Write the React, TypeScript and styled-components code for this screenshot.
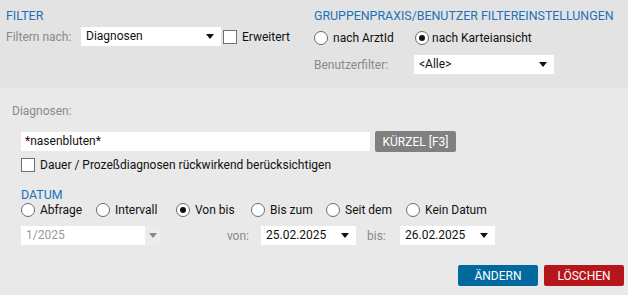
import React from "react";
import styled, { createGlobalStyle } from "styled-components";

const Global = createGlobalStyle`
  html, body { margin: 0; padding: 0; background: #e9e9e9; }
  body { font-family: Roboto, "Liberation Sans", Arial, sans-serif; font-size: 12px; color: #111; }
  * { box-sizing: border-box; }
`;

const Page = styled.div`
  width: 628px;
  height: 295px;
  display: flex;
  flex-direction: column;
  overflow: hidden;
`;

const TopPanel = styled.div`
  height: 88px;
  background: #e3e3e3;
  padding: 8px 0 0 6px;
  display: grid;
  grid-template-columns: 308px 1fr;
`;

const Column = styled.div`
  display: flex;
  flex-direction: column;
`;

const Title = styled.div<{ $h?: number }>`
  color: #1c72b8;
  font-size: 12.4px;
  line-height: ${(p) => p.$h ?? 16}px;
  height: ${(p) => p.$h ?? 16}px;
  text-transform: uppercase;
  white-space: nowrap;
`;

const Row = styled.div<{ $mt?: number; $h?: number }>`
  display: flex;
  align-items: center;
  margin-top: ${(p) => p.$mt ?? 0}px;
  height: ${(p) => p.$h ?? 19}px;
  white-space: nowrap;
`;

const Label = styled.span<{ $w?: number }>`
  color: #8a8a8a;
  width: ${(p) => (p.$w ? `${p.$w}px` : "auto")};
  flex: none;
`;

const SelectBox = styled.div<{ $w: number; $disabled?: boolean }>`
  width: ${(p) => p.$w}px;
  height: 19px;
  background: #fff;
  display: flex;
  align-items: center;
  flex: none;
  color: ${(p) => (p.$disabled ? "#999" : "#111")};
`;

const SelectText = styled.span`
  flex: 1;
  padding-left: 5px;
  line-height: 19px;
`;

const ArrowCell = styled.span<{ $disabled?: boolean }>`
  width: 16px;
  height: 19px;
  display: flex;
  align-items: center;
  justify-content: center;
  background: ${(p) => (p.$disabled ? "#ececec" : "transparent")};
  margin-right: 3px;
  &::after {
    content: "";
    border-left: 4px solid transparent;
    border-right: 4px solid transparent;
    border-top: 5px solid ${(p) => (p.$disabled ? "#888" : "#111")};
  }
`;

const Box = styled.span`
  width: 14px;
  height: 14px;
  background: #fff;
  border: 1px solid #707070;
  flex: none;
`;

const Radio = styled.span<{ $on?: boolean }>`
  width: 14px;
  height: 14px;
  border-radius: 50%;
  background: #fff;
  border: 1px solid #6a6a6a;
  flex: none;
  display: flex;
  align-items: center;
  justify-content: center;
  &::after {
    content: "";
    display: ${(p) => (p.$on ? "block" : "none")};
    width: 6px;
    height: 6px;
    border-radius: 50%;
    background: #111;
  }
`;

const Option = styled.label<{ $w?: number; $gap?: number }>`
  display: flex;
  align-items: center;
  gap: ${(p) => p.$gap ?? 5}px;
  width: ${(p) => (p.$w ? `${p.$w}px` : "auto")};
  flex: none;
  color: #111;
`;

const LowerPanel = styled.div`
  flex: 1;
  background: #e9e9e9;
  padding: 15px 4px 0 12px;
  display: flex;
  flex-direction: column;
`;

const Inner = styled.div`
  margin-left: 9px;
  display: flex;
  flex-direction: column;
`;

const TextInput = styled.div`
  width: 349px;
  height: 19px;
  background: #fff;
  padding-left: 4px;
  line-height: 19px;
  color: #111;
`;

const GrayButton = styled.div`
  margin-left: 5px;
  width: 81px;
  height: 21px;
  border-radius: 2px;
  background: #808080;
  color: #fff;
  font-size: 12px;
  display: flex;
  align-items: center;
  justify-content: center;
`;

const Actions = styled.div`
  margin-top: 20px;
  display: flex;
  justify-content: flex-end;
  gap: 6px;
`;

const ActionButton = styled.div<{ $bg: string }>`
  width: 80px;
  height: 21px;
  border-radius: 2px;
  background: ${(p) => p.$bg};
  color: #fff;
  font-size: 12px;
  display: flex;
  align-items: center;
  justify-content: center;
`;

export default function App() {
  return (
    <Page>
      <Global />
      <TopPanel>
        <Column>
          <Title>Filter</Title>
          <Row $mt={3}>
            <Label $w={75}>Filtern nach:</Label>
            <SelectBox $w={140}>
              <SelectText>Diagnosen</SelectText>
              <ArrowCell />
            </SelectBox>
            <Option $gap={5} style={{ marginLeft: 2 }}>
              <Box />
              Erweitert
            </Option>
          </Row>
        </Column>
        <Column>
          <Title>Gruppenpraxis/Benutzer Filtereinstellungen</Title>
          <Row $mt={4}>
            <Option $w={101}>
              <Radio />
              nach ArztId
            </Option>
            <Option $gap={3}>
              <Radio $on />
              nach Karteiansicht
            </Option>
          </Row>
          <Row $mt={8}>
            <Label $w={100}>Benutzerfilter:</Label>
            <SelectBox $w={140}>
              <SelectText>&lt;Alle&gt;</SelectText>
              <ArrowCell />
            </SelectBox>
          </Row>
        </Column>
      </TopPanel>
      <LowerPanel>
        <Row $h={16}>
          <Label>Diagnosen:</Label>
        </Row>
        <Inner>
          <Row $mt={12} $h={21}>
            <TextInput>*nasenbluten*</TextInput>
            <GrayButton>KÜRZEL [F3]</GrayButton>
          </Row>
          <Row $mt={5} $h={16}>
            <Option $gap={5}>
              <Box />
              Dauer / Prozeßdiagnosen rückwirkend berücksichtigen
            </Option>
          </Row>
          <Title $h={14} style={{ marginTop: 15 }}>Datum</Title>
          <Row $h={16}>
            <Option $w={75}>
              <Radio />
              Abfrage
            </Option>
            <Option $w={80}>
              <Radio />
              Intervall
            </Option>
            <Option $w={75}>
              <Radio $on />
              Von bis
            </Option>
            <Option $w={75}>
              <Radio />
              Bis zum
            </Option>
            <Option $w={80}>
              <Radio />
              Seit dem
            </Option>
            <Option>
              <Radio />
              Kein Datum
            </Option>
          </Row>
          <Row $mt={8}>
            <SelectBox $w={140} $disabled>
              <SelectText>1/2025</SelectText>
              <ArrowCell $disabled style={{ marginRight: 0 }} />
            </SelectBox>
            <Label $w={100} style={{ textAlign: "right", paddingRight: 12 }}>
              von:
            </Label>
            <SelectBox $w={95}>
              <SelectText>25.02.2025</SelectText>
              <ArrowCell />
            </SelectBox>
            <Label $w={44} style={{ paddingLeft: 11 }}>
              bis:
            </Label>
            <SelectBox $w={95}>
              <SelectText>26.02.2025</SelectText>
              <ArrowCell />
            </SelectBox>
          </Row>
        </Inner>
        <Actions>
          <ActionButton $bg="#006a9f">ÄNDERN</ActionButton>
          <ActionButton $bg="#b5161b">LÖSCHEN</ActionButton>
        </Actions>
      </LowerPanel>
    </Page>
  );
}
